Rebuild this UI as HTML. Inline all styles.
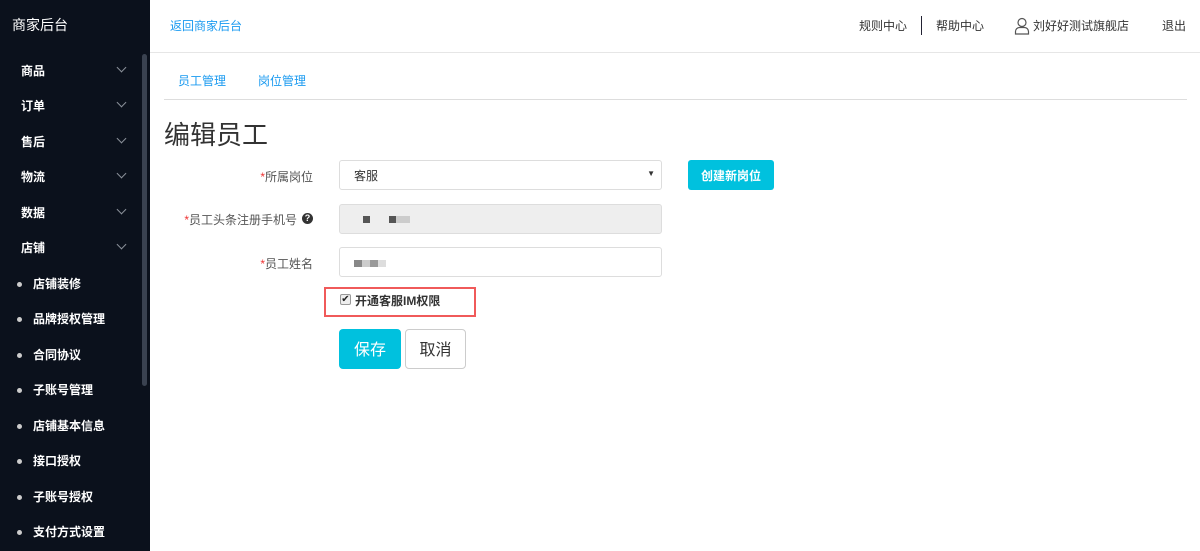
<!DOCTYPE html>
<html><head><meta charset="utf-8"><style>
*{margin:0;padding:0;box-sizing:border-box}
body{width:1200px;height:551px;overflow:hidden;font-family:"Liberation Sans","Noto Sans CJK SC",sans-serif;font-size:12px;line-height:1.2;color:#333;background:#fff;position:relative}
.sb{position:absolute;left:0;top:0;width:150px;height:551px;background:#0b111c;color:#fff}
.sb .logo{position:absolute;left:12px;top:17px;font-size:14px}
.sb .it{position:absolute;left:21px;font-size:12px;font-weight:bold}
.sb .ar{position:absolute;left:118px;width:7px;height:7px;border-right:1.5px solid #8a9099;border-bottom:1.5px solid #8a9099;transform:rotate(45deg)}
.sb .sub{position:absolute;left:33px;font-size:12px;font-weight:bold}
.sb .dot{position:absolute;left:17px;width:5px;height:5px;border-radius:50%;background:#ccc}
.sb .scr{position:absolute;left:142px;top:54px;width:5px;height:332px;border-radius:3px;background:#3a4250}
.hd{position:absolute;left:150px;top:0;right:0;height:53px;border-bottom:1px solid #e6e6e6}
.abs{position:absolute}
.blue{color:#1a9af0}
.lbl{position:absolute;right:887px;font-size:12px;color:#555;white-space:nowrap}
.lbl i{color:#e33;font-style:normal}
.inp{position:absolute;left:339px;width:323px;height:30px;border:1px solid #ddd;border-radius:3px;background:#fff}
</style></head><body>
<div class="sb">
<div class="logo">商家后台</div>
<div class="scr"></div>
<div class="it" style="top:64px">商品</div><div class="ar" style="top:64px"></div>
<div class="it" style="top:99px">订单</div><div class="ar" style="top:99px"></div>
<div class="it" style="top:135px">售后</div><div class="ar" style="top:135px"></div>
<div class="it" style="top:170px">物流</div><div class="ar" style="top:170px"></div>
<div class="it" style="top:206px">数据</div><div class="ar" style="top:206px"></div>
<div class="it" style="top:241px">店铺</div><div class="ar" style="top:241px"></div>
<div class="dot" style="top:282px"></div><div class="sub" style="top:277px">店铺装修</div>
<div class="dot" style="top:317px"></div><div class="sub" style="top:312px">品牌授权管理</div>
<div class="dot" style="top:353px"></div><div class="sub" style="top:348px">合同协议</div>
<div class="dot" style="top:388px"></div><div class="sub" style="top:383px">子账号管理</div>
<div class="dot" style="top:424px"></div><div class="sub" style="top:419px">店铺基本信息</div>
<div class="dot" style="top:459px"></div><div class="sub" style="top:454px">接口授权</div>
<div class="dot" style="top:495px"></div><div class="sub" style="top:490px">子账号授权</div>
<div class="dot" style="top:530px"></div><div class="sub" style="top:525px">支付方式设置</div>
</div>
<div class="hd"></div>
<div class="abs blue" style="left:170px;top:19px">返回商家后台</div>
<div class="abs" style="left:859px;top:19px">规则中心</div>
<div class="abs" style="left:921px;top:16px;width:1px;height:19px;background:#223"></div>
<div class="abs" style="left:936px;top:19px">帮助中心</div>
<svg class="abs" style="left:1014px;top:17px" width="16" height="18" viewBox="0 0 16 18"><circle cx="8" cy="5.5" r="4" fill="none" stroke="#555" stroke-width="1.2"/><path d="M1.5 17v-2.5a4 4 0 0 1 4-4h5a4 4 0 0 1 4 4V17z" fill="none" stroke="#555" stroke-width="1.2"/></svg>
<div class="abs" style="left:1033px;top:19px">刘好好测试旗舰店</div>
<div class="abs" style="left:1162px;top:19px">退出</div>
<div class="abs blue" style="left:178px;top:74px">员工管理</div>
<div class="abs blue" style="left:258px;top:74px">岗位管理</div>
<div class="abs" style="left:164px;top:99px;width:1023px;height:1px;background:#ddd"></div>
<div class="abs" style="left:164px;top:120px;font-size:26px;color:#333">编辑员工</div>
<div class="lbl" style="top:170px"><i>*</i>所属岗位</div>
<div class="inp" style="top:160px"><span class="abs" style="left:14px;top:8px">客服</span><span class="abs" style="right:6px;top:8px;font-size:8px">▼</span></div>
<div class="abs" style="left:688px;top:160px;width:86px;height:30px;background:#00c1de;border-radius:3px;color:#fff;text-align:center;line-height:32px;font-weight:bold">创建新岗位</div>
<div class="lbl" style="top:213px;right:903px"><i>*</i>员工头条注册手机号</div>
<div class="abs" style="left:302px;top:213px;width:11px;height:11px;border-radius:50%;background:#333;color:#fff;font-size:9px;font-weight:bold;text-align:center;line-height:11px">?</div>
<div class="inp" style="top:204px;background:#eee"><span class="abs" style="left:23px;top:11px;width:7px;height:7px;background:#555"></span><span class="abs" style="left:49px;top:11px;width:7px;height:7px;background:#555"></span><span class="abs" style="left:56px;top:11px;width:14px;height:7px;background:#ccc"></span></div>
<div class="lbl" style="top:257px"><i>*</i>员工姓名</div>
<div class="inp" style="top:247px"><span class="abs" style="left:14px;top:12px;width:8px;height:7px;background:#888"></span><span class="abs" style="left:22px;top:12px;width:8px;height:7px;background:#ccc"></span><span class="abs" style="left:30px;top:12px;width:8px;height:7px;background:#999"></span><span class="abs" style="left:38px;top:12px;width:8px;height:7px;background:#ddd"></span></div>
<div class="abs" style="left:324px;top:287px;width:152px;height:30px;border:2px solid #f05a5a"></div>
<div class="abs" style="left:340px;top:294px;width:11px;height:11px;border:1px solid #999;border-radius:2px;background:#eee;font-size:10px;line-height:9px;text-align:center;color:#222">✔</div>
<div class="abs" style="left:355px;top:294px;font-weight:bold;color:#333">开通客服IM权限</div>
<div class="abs" style="left:339px;top:329px;width:62px;height:40px;background:#00c1de;border-radius:4px;color:#fff;font-size:16px;text-align:center;line-height:44px">保存</div>
<div class="abs" style="left:405px;top:329px;width:61px;height:40px;border:1px solid #ccc;border-radius:4px;font-size:16px;text-align:center;line-height:42px;color:#333">取消</div>
</body></html>
